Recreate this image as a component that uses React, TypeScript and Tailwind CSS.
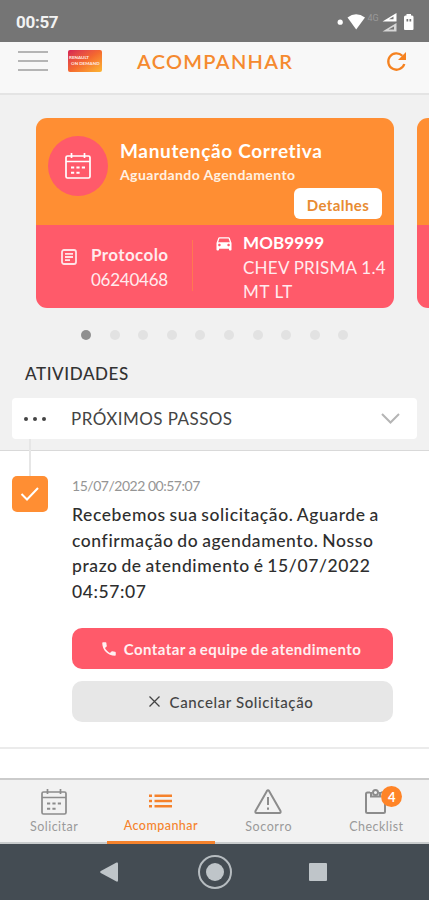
import { MdDirectionsCar, MdPhone } from "react-icons/md";

const dots = [0, 1, 2, 3, 4, 5, 6, 7, 8, 9];

function CalendarIcon({ className }: { className?: string }) {
  return (
    <svg viewBox="0 0 26 26" fill="none" stroke="currentColor" strokeWidth="1.7" className={className}>
      <rect x="1" y="3" width="24" height="22" rx="1.5" />
      <path d="M1 8.5h24M6.5 0v5M19.5 0v5" />
      <path d="M6 14.5h3.2M11.4 14.5h3.2M16.8 14.5H20M6 19.8h3.2M11.4 19.8h3.2" strokeWidth="2" />
    </svg>
  );
}

function StatusBar() {
  return (
    <div className="h-[42px] bg-[#757575] text-white flex items-center justify-between pl-4 pr-[15px] pt-[2px]">
      <div className="font-[Roboto] font-bold text-[17px] leading-5 tracking-[-0.3px] text-[#f2f2f2]">00:57</div>
      <svg width="77" height="20" viewBox="0 0 77 20" fill="currentColor">
        <circle cx="3.2" cy="10.2" r="2.6" />
        <path d="M10.500 5.500Q19 -1 28 5.500L19.200 17.600Z" />
        <text x="30.500" y="8.500" fontSize="9" fontFamily="Roboto" fill="#999">4G</text>
        <path d="M59.500 1V9.500H45.500ZM56.500 4.500L52 7.300H56.500Z" fillRule="evenodd" />
        <path d="M59.500 11V19.500H45.500ZM57 14.500L51.500 17.500H57Z" fillRule="evenodd" fill="#d6d6d6" />
        <path d="M69.500 2h4.500v1.500h1q1.500 0 1.500 1.500v12q0 1-1 1h-7.500q-1 0-1-1V5q0-1.500 1.500-1.500h1ZM69.500 7v2.500h1.700V7ZM72.500 7v2.500h1.700V7Z" fillRule="evenodd" />
      </svg>
    </div>
  );
}

function Header() {
  return (
    <div className="h-[53px] bg-[#f8f8f8] border-b-2 border-[#e4e4e4] flex items-start px-[18px]">
      <div className="w-[30px] mt-[9px] flex flex-col gap-[7px]">
        <div className="h-[2px] bg-[#b5b5b5]"></div>
        <div className="h-[2px] bg-[#b5b5b5]"></div>
        <div className="h-[2px] bg-[#b5b5b5]"></div>
      </div>
      <div className="ml-5 mt-2 w-[34px] h-[22px] rounded-[2px] bg-linear-to-br from-[#d51f52] via-[#f4682f] to-[#fbb633] flex flex-col justify-center font-black text-[#ffe3dc] text-[4.5px] leading-[6px] whitespace-nowrap">
        <div className="pl-px">RENAULT</div>
        <div className="pl-[3px]">ON DEMAND</div>
      </div>
      <div className="ml-[35px] mt-[7px] text-[20px] leading-6 font-semibold tracking-[1.3px] text-[#f58a2f]">ACOMPANHAR</div>
      <svg className="ml-auto mt-[9px] mr-[4px]" width="21" height="21" viewBox="0 0 21 21">
        <path d="M16.300 4.700A8.200 8.200 0 1 0 18.300 13" fill="none" stroke="#f58220" strokeWidth="2.300" />
        <path d="M20 1V9H12Z" fill="#f58220" />
      </svg>
    </div>
  );
}

function ServiceCard() {
  return (
    <div className="w-[358px] h-[190px] shrink-0 rounded-[11px] overflow-hidden text-white">
      <div className="h-[107px] bg-[#ff8e33] flex">
        <div className="ml-3 mt-[18px] w-[60px] h-[60px] rounded-full bg-[#ff5a6a] flex items-center justify-center">
          <CalendarIcon className="w-[26px] h-[26px]" />
        </div>
        <div className="ml-3 mt-[21px] flex-1 flex flex-col">
          <div className="text-[19px] leading-6 font-bold tracking-[0.65px] whitespace-nowrap">Manutenção Corretiva</div>
          <div className="text-[14px] leading-6 font-bold tracking-[0.4px] whitespace-nowrap text-[#fff1e2]">Aguardando Agendamento</div>
          <div className="self-end mt-px mr-3 w-[88px] h-[31px] rounded-md bg-white text-[#e88b32] text-[15px] font-bold tracking-[0.4px] flex items-center justify-center pt-1">Detalhes</div>
        </div>
      </div>
      <div className="h-[83px] bg-[#ff5a6a] flex text-[17px] leading-[24.5px]">
        <svg className="ml-[25px] mt-6 w-4 h-4" viewBox="0 0 16 16" fill="none" stroke="#ffe3e6" strokeWidth="1.8">
          <rect x="1" y="1" width="14" height="14" rx="2" />
          <path d="M4 4.800h8M4 8h8M4 11.200h5" />
        </svg>
        <div className="ml-3.5 mt-[18px] w-[101px] text-[#ffebee]">
          <div className="font-bold tracking-[0.4px]">Protocolo</div>
          <div className="tracking-[-0.25px]">06240468</div>
        </div>
        <div className="mt-[15px] w-px h-[51px] bg-[#ff7750]"></div>
        <MdDirectionsCar className="ml-[21px] mt-2 w-[20px] h-[20px]" />
        <div className="ml-[9px] mt-[6px] whitespace-nowrap">
          <div className="font-bold tracking-[0.1px]">MOB9999</div>
          <div className="text-[#ffebee] tracking-[0.25px]">CHEV PRISMA 1.4</div>
          <div className="text-[#ffebee] tracking-[0.6px]">MT LT</div>
        </div>
      </div>
    </div>
  );
}

function NextCard() {
  return (
    <div className="w-[358px] h-[190px] shrink-0 rounded-[11px] overflow-hidden">
      <div className="h-[107px] bg-[#ff8e33]"></div>
      <div className="h-[83px] bg-[#ff5a6a]"></div>
    </div>
  );
}

function Activities() {
  return (
    <div className="h-[327px] bg-white flex pl-3 relative">
      {/* timeline line behind the dropdown and the check */}
      <div className="absolute left-[29px] -top-[12px] w-[2px] h-[37px] bg-[#e6e6e6]"></div>
      <div className="mt-[25px] w-9 h-9 rounded-[5px] bg-[#ff8e33] flex items-center justify-center">
        <svg width="20" height="16" viewBox="0 0 20 16" fill="none" stroke="#fff" strokeWidth="2">
          <path d="M1.500 8L7 13.500L18 2" />
        </svg>
      </div>
      <div className="ml-6 mt-[23px] w-[321px]">
        <div className="text-[14px] leading-6 tracking-[-0.48px] text-[#959595]">15/07/2022 00:57:07</div>
        <div className="mt-[4px] text-[17.5px] leading-[25.6px] font-medium tracking-[0.6px] [word-spacing:-1.2px] text-[#2e2e2e] whitespace-nowrap">
          <div>Recebemos sua solicitação. Aguarde a</div>
          <div>confirmação do agendamento. Nosso</div>
          <div>prazo de atendimento é 15/07/2022</div>
          <div>04:57:07</div>
        </div>
        <div className="mt-[24px] pr-[4px] h-[41px] rounded-[10px] bg-[#ff5a6a] flex items-center justify-center text-[15px] font-bold tracking-[0.45px] [word-spacing:-1px] text-[#fff0f1] whitespace-nowrap">
          <MdPhone className="w-[18px] h-[18px] mr-1.5" />
          <span>Contatar a equipe de atendimento</span>
        </div>
        <div className="mt-3 pr-[3px] h-[41px] rounded-[10px] bg-[#e7e7e7] flex items-center justify-center text-[15px] font-medium tracking-[0.6px] text-[#444] whitespace-nowrap">
          <svg className="mr-2.5" width="11" height="11" viewBox="0 0 11 11" stroke="#444" strokeWidth="1.300">
            <path d="M.5.5l10 10M10.500.5l-10 10" />
          </svg>
          <span>Cancelar Solicitação</span>
        </div>
      </div>
    </div>
  );
}

function TabBar() {
  return (
    <div className="h-[66px] bg-[#f2f2f2] border-t-2 border-[#cbcbcb] grid grid-cols-4 text-[12.5px] leading-4 tracking-[0.45px] text-[#9a9a9a] text-center">
      <div className="flex flex-col items-center pt-[9px] border-b-2 border-[#c9cccd]">
        <CalendarIcon className="w-[26px] h-[26px] ml-px text-[#8c8c8c]" />
        <div className="mt-[4px] ml-px">Solicitar</div>
      </div>
      <div className="flex flex-col items-center pt-[14px] border-b-3 border-[#f5822c] text-[#f5822c] font-medium">
        <svg width="23" height="14" viewBox="0 0 23 14" fill="currentColor">
          <path d="M0 .5h3v2.400H0zM5.500.5H23v2.400H5.500zM0 5.800h3v2.400H0zM5.500 5.800H23v2.400H5.500zM0 11h3v2.400H0zM5.500 11H23v2.400H5.500z" />
        </svg>
        <div className="mt-[10px]">Acompanhar</div>
      </div>
      <div className="flex flex-col items-center pt-[9px] border-b-2 border-[#c9cccd]">
        <svg width="28" height="26" viewBox="0 0 28 26" fill="none" stroke="#8c8c8c" strokeWidth="2" strokeLinejoin="round">
          <path d="M12.800 2.200Q14 .5 15.200 2.200L26.500 22Q27 24 25.500 24H2.500Q1 24 1.500 22Z" />
          <path d="M14 8v8M14 18.500v2.300" />
        </svg>
        <div className="mt-[4px] ml-px tracking-[0.6px]">Socorro</div>
      </div>
      <div className="flex flex-col items-center pt-[9px] pl-[2px] border-b-2 border-[#c9cccd]">
        <div className="relative">
          <svg width="22" height="26" viewBox="0 0 22 26" fill="none" stroke="#8c8c8c" strokeWidth="2">
            <path d="M5 3.500H2.500Q1 3.500 1 5V22.500Q1 24 2.500 24H18.500Q20 24 20 22.500V5Q20 3.500 18.500 3.500H16" />
            <path d="M6 3V7.500H15V3" />
            <circle cx="10.500" cy="3.500" r="2.500" />
          </svg>
          <div className="absolute -top-[3px] left-[16px] w-[21px] h-[21px] rounded-full bg-[#ff8427] text-white text-[13px] font-bold tracking-normal flex items-center justify-center">4</div>
        </div>
        <div className="mt-[4px]">Checklist</div>
      </div>
    </div>
  );
}

function NavBar() {
  return (
    <div className="h-14 bg-[#444c53] grid grid-cols-[118px_194px_117px] items-center">
      <svg className="justify-self-end" width="18" height="20" viewBox="0 0 18 20" fill="#bfc5c9">
        <path d="M16.500.5Q18 0 18 1.500V18.500Q18 20 16.500 19.500L.8 11Q-.5 10 .8 9Z" />
      </svg>
      <svg className="justify-self-center" width="36" height="36" viewBox="0 0 36 36">
        <circle cx="18" cy="18" r="16" fill="none" stroke="#b6bcc0" strokeWidth="2" />
        <circle cx="18" cy="18" r="9" fill="#bfc5c9" />
      </svg>
      <div className="w-[18px] h-[18px] -ml-[3px] rounded-[1px] bg-[#bfc5c9]"></div>
    </div>
  );
}

export default function App() {
  return (
    <div className="w-[429px] h-[900px] overflow-hidden font-[Lato,sans-serif] bg-white">
      <StatusBar />
      <Header />
      <div className="h-[356px] bg-[#f1f1f1] border-b border-[#d9d9d9]">
        <div className="pt-[23px] pl-[36px] flex gap-[23px] overflow-hidden">
          <ServiceCard />
          <NextCard />
        </div>
        <div className="mt-[22px] ml-[81px] flex gap-[18.6px]">
          {dots.map((dot) => (
            <div key={dot} className={dot === 0 ? "w-[10px] h-[10px] rounded-full bg-[#8f8f8f]" : "w-[10px] h-[10px] rounded-full bg-[#e2e2e2]"}></div>
          ))}
        </div>
        <div className="mt-[22px] ml-[25px] text-[17px] leading-6 font-medium tracking-[0.6px] text-[#333]">ATIVIDADES</div>
        <div className="mt-[12px] ml-3 w-[405px] h-[41px] rounded-[4px] bg-white flex items-center">
          <div className="ml-3 flex gap-[5px]">
            <div className="w-1 h-1 rounded-full bg-[#444]"></div>
            <div className="w-1 h-1 rounded-full bg-[#444]"></div>
            <div className="w-1 h-1 rounded-full bg-[#444]"></div>
          </div>
          <div className="ml-[25px] text-[17px] tracking-[0.45px] text-[#444]">PRÓXIMOS PASSOS</div>
          <svg className="ml-auto mr-[17px]" width="19" height="11" viewBox="0 0 19 11" fill="none" stroke="#b5b5b5" strokeWidth="2">
            <path d="M1 1l8.500 8.500L18 1" />
          </svg>
        </div>
      </div>
      <div className="relative">
        <Activities />
        <div className="absolute top-[296px] w-full h-[2px] bg-[#ebebeb]"></div>
      </div>
      <TabBar />
      <NavBar />
    </div>
  );
}
